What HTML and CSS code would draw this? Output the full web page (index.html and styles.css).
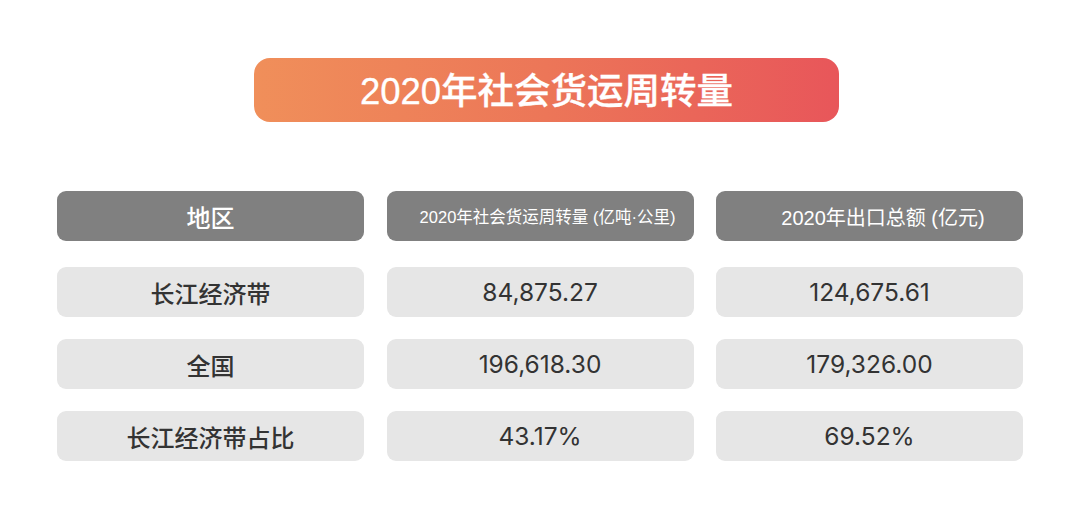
FILE: index.html
```html
<!DOCTYPE html>
<html lang="zh-CN">
<head>
<meta charset="utf-8">
<title>2020年社会货运周转量</title>
<link rel="stylesheet" href="styles.css">
</head>
<body>
<main class="page">
  <div class="banner"><h1 class="banner-title">2020年社会货运周转量</h1></div>
  <div class="table">
    <div class="cell head head-region">地区</div>
    <div class="cell head head-volume">2020年社会货运周转量 (亿吨·公里)</div>
    <div class="cell head head-export">2020年出口总额 (亿元)</div>

    <div class="cell">长江经济带</div>
    <div class="cell num">84,875.27</div>
    <div class="cell num">124,675.61</div>

    <div class="cell">全国</div>
    <div class="cell num">196,618.30</div>
    <div class="cell num">179,326.00</div>

    <div class="cell">长江经济带占比</div>
    <div class="cell num">43.17%</div>
    <div class="cell num">69.52%</div>
  </div>
</main>
</body>
</html>
```

FILE: styles.css
```css
html, body {
  margin: 0;
  padding: 0;
  background: #ffffff;
}

body {
  width: 1080px;
  height: 516px;
  overflow: hidden;
  font-family: "Liberation Sans", "Noto Sans CJK SC", sans-serif;
}

.page {
  display: flex;
  flex-direction: column;
  padding-top: 58px;
}

.banner {
  margin-left: 254px;
  width: 585px;
  height: 64px;
  border-radius: 16px;
  background: linear-gradient(90deg, #f08f5a 0%, #ec7658 50%, #e8565a 100%);
  display: flex;
  align-items: center;
  justify-content: center;
}

.banner-title {
  margin: 0;
  margin-top: 4px;
  color: #ffffff;
  font-size: 36.5px;
  font-weight: 500;
  line-height: 1;
  -webkit-text-stroke: 0.3px #ffffff;
}

.table {
  margin-top: 69px;
  margin-left: 57px;
  display: grid;
  grid-template-columns: repeat(3, 307px);
  grid-template-rows: 54px repeat(3, 50px);
  column-gap: 22.5px;
  row-gap: 22px;
}

.cell {
  background: #e6e6e6;
  border-radius: 9px;
  display: flex;
  align-items: center;
  justify-content: center;
  color: #333333;
  font-size: 24px;
  font-weight: 500;
  white-space: nowrap;
}

.num {
  font-family: "Inter", "Noto Sans CJK SC", sans-serif;
  font-size: 24.5px;
  font-weight: 400;
  padding-bottom: 1px;
}

.head {
  background: #808080;
  color: #ffffff;
  height: 50px;
  align-self: start;
}

.head-region {
  font-size: 24px;
}

.head-volume {
  font-size: 16.5px;
  padding-left: 15px;
  font-weight: 400;
}

.head-export {
  font-size: 20px;
  padding-left: 27px;
  font-weight: 400;
}
```
